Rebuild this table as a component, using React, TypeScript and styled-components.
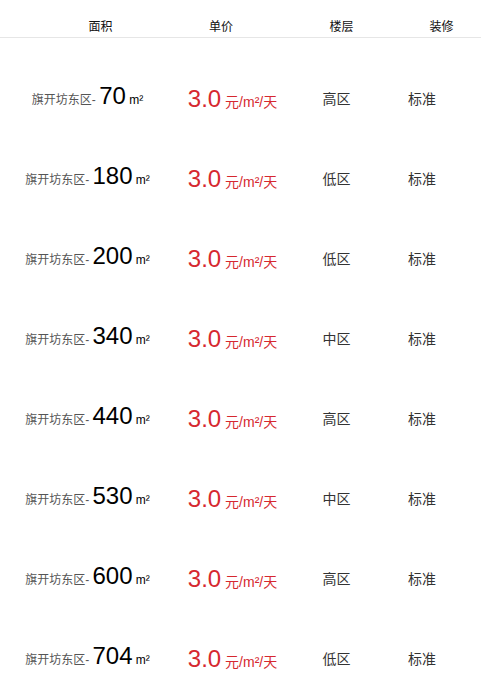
import React from 'react'
import styled, { createGlobalStyle } from 'styled-components'

const GlobalStyle = createGlobalStyle`
  html, body {
    margin: 0;
    padding: 0;
    background: #fff;
  }
  body {
    font-family: "Liberation Sans", Arial, "Noto Sans CJK SC", sans-serif;
  }
`

type Office = {
    area: number
    price: string
    floor: string
    decor: string
}

const OFFICES: Office[] = [
    { area: 70, price: '3.0', floor: '高区', decor: '标准' },
    { area: 180, price: '3.0', floor: '低区', decor: '标准' },
    { area: 200, price: '3.0', floor: '低区', decor: '标准' },
    { area: 340, price: '3.0', floor: '中区', decor: '标准' },
    { area: 440, price: '3.0', floor: '高区', decor: '标准' },
    { area: 530, price: '3.0', floor: '中区', decor: '标准' },
    { area: 600, price: '3.0', floor: '高区', decor: '标准' },
    { area: 704, price: '3.0', floor: '低区', decor: '标准' },
]

const App = () => {
    return (
        <Page>
            <GlobalStyle />
            <Header>
                <HeadCell>面积</HeadCell>
                <HeadCell>单价</HeadCell>
                <HeadCell>楼层</HeadCell>
                <HeadCell>装修</HeadCell>
            </Header>
            <List>
                {OFFICES.map((item) => (
                    <Row key={item.area}>
                        <AreaCell>
                            <Building>旗开坊东区-</Building> <Big>{item.area}</Big> <Unit>m²</Unit>
                        </AreaCell>
                        <PriceCell>
                            <Big>{item.price}</Big> <PriceUnit>元/m²/天</PriceUnit>
                        </PriceCell>
                        <TextCell>{item.floor}</TextCell>
                        <TextCell>{item.decor}</TextCell>
                    </Row>
                ))}
            </List>
        </Page>
    )
}

const Page = styled.div`
  width: 481px;
  background: #fff;
`

const Header = styled.div`
  display: grid;
  grid-template-columns: 121px 120px 121px 79px;
  padding: 17px 0 0 40px;
  height: 20px;
  border-bottom: 1px solid #e6e6e6;
`

const HeadCell = styled.div`
  text-align: center;
  font-size: 12px;
  line-height: 20px;
  color: #111;
`

const List = styled.div`
  display: flex;
  flex-direction: column;
`

const Row = styled.div`
  display: grid;
  grid-template-columns: 175px 115px 93px 78px;
  align-items: baseline;
  box-sizing: border-box;
  height: 80px;
  padding-top: 43px;
`

const AreaCell = styled.div`
  text-align: center;
  font-size: 12px;
  line-height: 30px;
  color: #000;
  white-space: nowrap;
`

const Building = styled.span`
  color: #555;
`

const Big = styled.span`
  font-size: 24px;
`

const Unit = styled.span`
  font-size: 12px;
  color: #000;
`

const PriceCell = styled.div`
  align-self: start;
  padding-top: 3px;
  text-align: center;
  font-size: 14px;
  line-height: 30px;
  color: #d6282f;
  white-space: nowrap;
`

const PriceUnit = styled.span`
  font-size: 14px;
`

const TextCell = styled.div`
  text-align: center;
  font-size: 14px;
  line-height: 30px;
  color: #333;
`

export default App
